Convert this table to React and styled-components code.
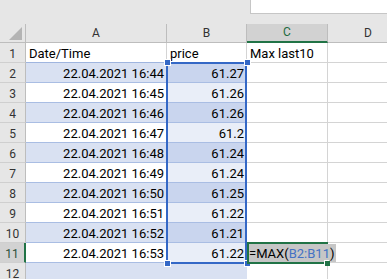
import React from 'react';
import styled, { createGlobalStyle } from 'styled-components';

const Global = createGlobalStyle`
  html, body { margin: 0; padding: 0; background: #fff; overflow: hidden; }
  body { font-family: Roboto, "Liberation Sans", sans-serif; }
`;

const Window = styled.div`
  width: 387px;
  height: 279px;
  overflow: hidden;
  background: #e6e6e6;
  display: flex;
  flex-direction: column;
`;

const TopBar = styled.div`
  height: 24px;
  flex: none;
  display: flex;
  justify-content: flex-end;
  align-items: flex-start;
`;

const FormulaBox = styled.div`
  width: 136px;
  height: 13px;
  background: #fff;
  border-left: 1px solid #c6c6c6;
  border-bottom: 1px solid #c6c6c6;
`;

const Grid = styled.div`
  position: relative;
  display: grid;
  grid-template-columns: 26px 141px 80px 81px 81px;
  grid-template-rows: 19px repeat(12, 20px);
  background: #fff;
  flex: none;
`;

const Corner = styled.div`
  background: #e6e6e6;
  border-right: 1px solid #bdbdbd;
  border-bottom: 1px solid #bdbdbd;
  display: flex;
  align-items: flex-end;
  justify-content: flex-end;
  padding: 0 3px 2px 0;
  box-sizing: border-box;
`;

const ColHead = styled.div`
  box-sizing: border-box;
  background: ${p => (p.$sel ? '#d2d2d2' : '#e6e6e6')};
  border-right: 1px solid #bdbdbd;
  border-bottom: ${p => (p.$sel ? '2px solid #217346' : '1px solid #bdbdbd')};
  color: ${p => (p.$sel ? '#1d6b40' : '#333')};
  font-size: 12px;
  line-height: ${p => (p.$sel ? '17px' : '18px')};
  text-align: center;
`;

const RowHead = styled.div`
  box-sizing: border-box;
  background: ${p => (p.$sel ? '#d2d2d2' : '#e6e6e6')};
  border-right: ${p => (p.$sel ? '2px solid #217346' : '1px solid #bdbdbd')};
  border-bottom: 1px solid #cfcfcf;
  color: ${p => (p.$sel ? '#2c4f3a' : '#333')};
  font-size: 12px;
  line-height: 16px;
  display: flex;
  align-items: flex-end;
  justify-content: center;
`;

const tones = {
  white: { bg: '#ffffff', v: '#d4d4d4', h: '#d4d4d4' },
  tableHead: { bg: '#ffffff', v: '#d4d4d4', h: '#9fb5df' },
  aBand: { bg: '#d9e1f2', v: '#d4d4d4', h: '#a9bde3' },
  aPlain: { bg: '#ffffff', v: '#d4d4d4', h: '#a9bde3' },
  bBand: { bg: '#c9d5ee', v: '#d4d4d4', h: '#a9bde3' },
  bPlain: { bg: '#e9eef8', v: '#d4d4d4', h: '#a9bde3' },
  tail: { bg: '#d9e1f2', v: '#d9e1f2', h: '#d9e1f2' },
};

const Cell = styled.div`
  box-sizing: border-box;
  background: ${p => tones[p.$tone].bg};
  border-right: 1px solid ${p => tones[p.$tone].v};
  border-bottom: 1px solid ${p => tones[p.$tone].h};
  display: flex;
  align-items: flex-end;
  justify-content: ${p => (p.$right ? 'flex-end' : 'flex-start')};
  padding: 0 2px 0 3px;
  font-size: 13px;
  line-height: 16px;
  color: #000;
  white-space: nowrap;
  overflow: hidden;
`;

const FormulaCell = styled.div`
  position: relative;
  z-index: 3;
  box-sizing: border-box;
  margin: -1px 0;
  border: 2px solid #217346;
  background: #fff;
  white-space: nowrap;
  font-size: 13px;
  line-height: 18px;
  color: #000;
`;

const Highlight = styled.span`
  display: inline-block;
  vertical-align: top;
  height: 18px;
  line-height: 20px;
  background: #c6c6c6;
  padding-right: 1px;
`;

const Ref = styled.span`
  color: #4472c4;
`;

const FillHandle = styled.span`
  position: absolute;
  right: -4px;
  bottom: -4px;
  width: 5px;
  height: 5px;
  background: #217346;
  box-shadow: -1px -1px 0 #fff;
`;

const RangeBox = styled.div`
  position: absolute;
  grid-column: 3 / 4;
  grid-row: 3 / 13;
  top: -1px;
  bottom: -1px;
  left: -1px;
  right: 0;
  border: 2px solid #3468c6;
  z-index: 2;
  pointer-events: none;
`;

const Handle = styled.span`
  position: absolute;
  width: 5px;
  height: 5px;
  background: #3468c6;
  box-shadow: 0 0 0 1px #fff;
  ${p => (p.$top ? 'top: -4px;' : 'bottom: -4px;')}
  ${p => (p.$left ? 'left: -3px;' : 'right: -5px;')}
`;

const data = [
  ['22.04.2021 16:44', '61.27'],
  ['22.04.2021 16:45', '61.26'],
  ['22.04.2021 16:46', '61.26'],
  ['22.04.2021 16:47', '61.2'],
  ['22.04.2021 16:48', '61.24'],
  ['22.04.2021 16:49', '61.24'],
  ['22.04.2021 16:50', '61.25'],
  ['22.04.2021 16:51', '61.22'],
  ['22.04.2021 16:52', '61.21'],
  ['22.04.2021 16:53', '61.22'],
];

export default function App() {
  return (
    <>
      <Global />
      <Window>
        <TopBar>
          <FormulaBox />
        </TopBar>
        <Grid>
          <Corner>
            <svg width="13" height="13" viewBox="0 0 13 13">
              <polygon points="13,0 13,13 0,13" fill="#b4b4b4" />
            </svg>
          </Corner>
          {['A', 'B', 'C', 'D'].map(l => (
            <ColHead key={l} $sel={l === 'C'}>{l}</ColHead>
          ))}

          <RowHead>1</RowHead>
          <Cell $tone="tableHead">Date/Time</Cell>
          <Cell $tone="tableHead">price</Cell>
          <Cell $tone="white">Max last10</Cell>
          <Cell $tone="white" />

          {data.map(([date, price], i) => {
            const row = i + 2;
            const band = row % 2 === 0;
            const last = row === 11;
            return (
              <React.Fragment key={row}>
                <RowHead $sel={last}>{row}</RowHead>
                <Cell $tone={band ? 'aBand' : 'aPlain'} $right>{date}</Cell>
                <Cell $tone={band ? 'bBand' : 'bPlain'} $right>{price}</Cell>
                {last ? (
                  <FormulaCell>
                    <Highlight>=MAX(<Ref>B2:B11</Ref>)</Highlight>
                    <FillHandle />
                  </FormulaCell>
                ) : (
                  <Cell $tone="white" />
                )}
                <Cell $tone="white" />
              </React.Fragment>
            );
          })}

          <RowHead>12</RowHead>
          <Cell $tone="tail" />
          <Cell $tone="tail" />
          <Cell $tone="white" />
          <Cell $tone="white" />

          <RangeBox>
            <Handle $top $left />
            <Handle $top />
            <Handle $left />
            <Handle />
          </RangeBox>
        </Grid>
      </Window>
    </>
  );
}
